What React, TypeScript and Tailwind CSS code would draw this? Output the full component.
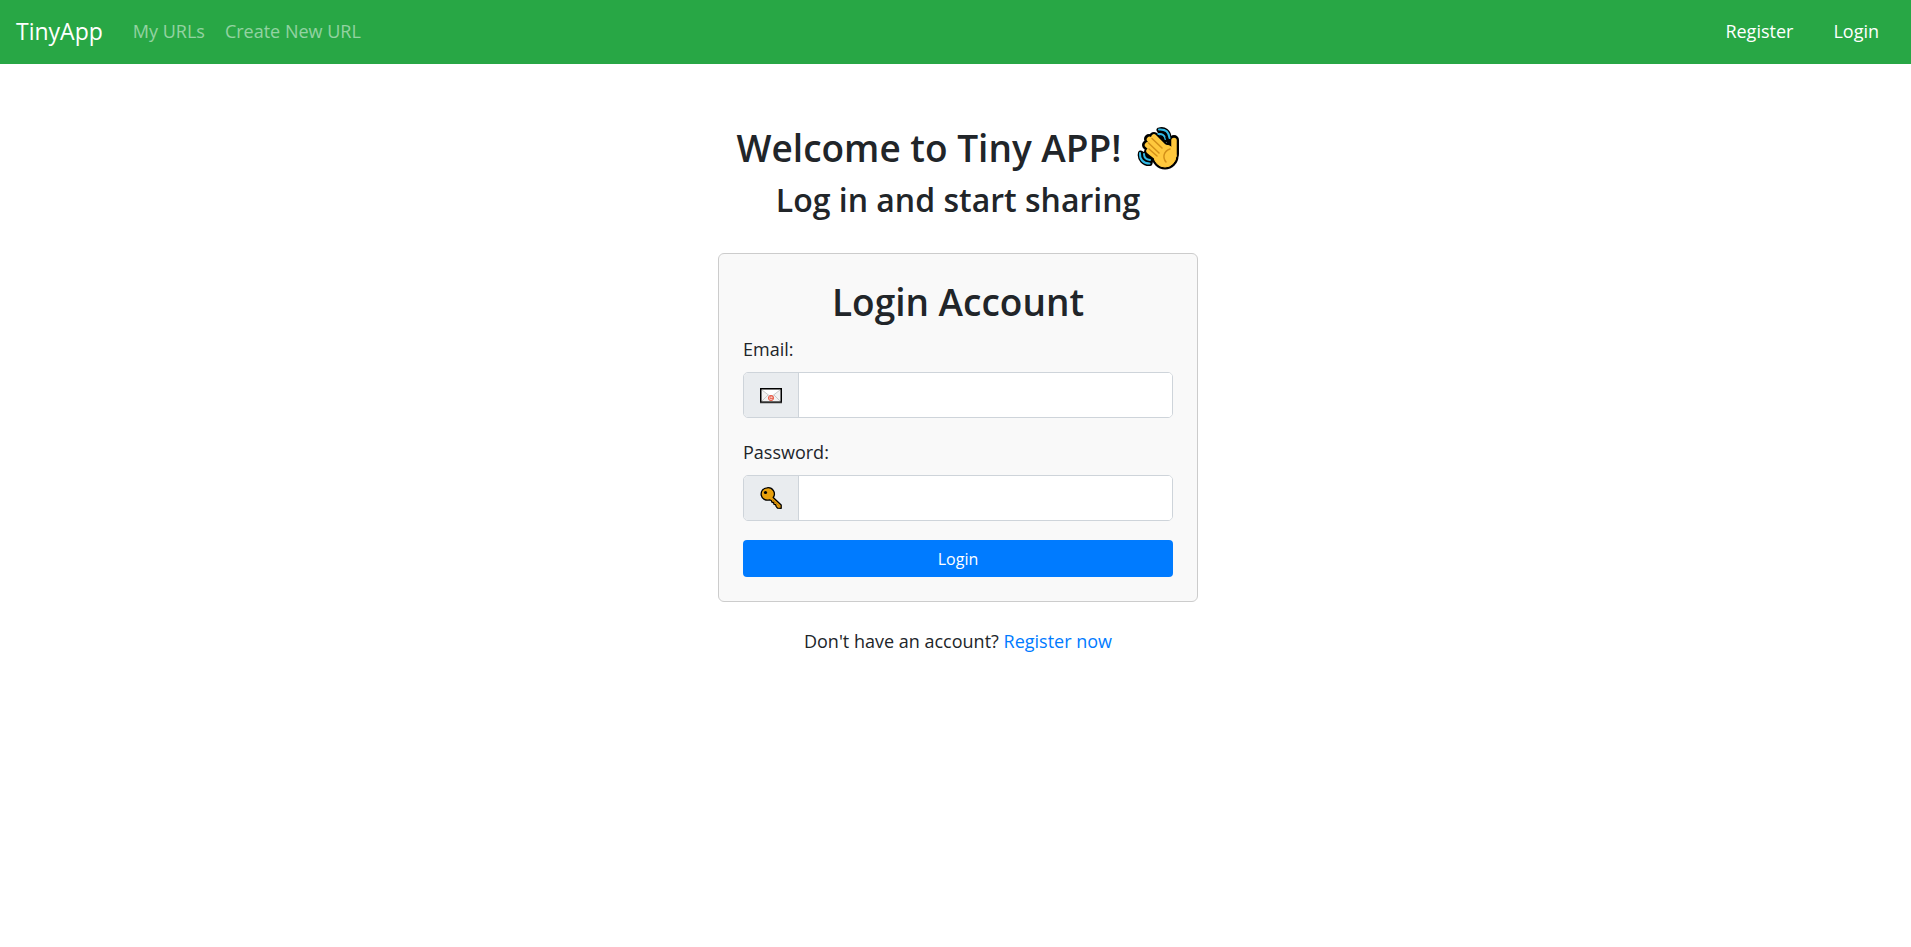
import React from "react";

function WavingHand() {
  return (
    <svg viewBox="0 0 42 44" className="h-11 w-[42px] shrink-0" role="img" aria-label="Waving hand">
      <g fill="#000" stroke="#000" strokeLinecap="round" strokeLinejoin="round">
        <path d="M22 4C27 2 32 6 32 12L28 14zM3.500 27C2 33 7 38 13 37.500L14 33z" strokeWidth="5" />
        <path d="M17 11L30 25M12 13L28 29M10 19L26 33M12 26L26 37M37 14V28" strokeWidth="10" />
        <circle cx="28" cy="30" r="12" strokeWidth="3" />
      </g>
      <path
        d="M22 3.500C28 3 32 6 32.500 12M21.500 8C25 7.500 28 9.500 28.500 13M3 27C2.500 33 6 37.500 12.500 37.500M7 28C7 31.500 9 33.500 13 34"
        fill="none"
        stroke="#32b9e6"
        strokeWidth="2"
        strokeLinecap="round"
      />
      <path d="M28 10L34 16V20L30 18z" fill="#000" />
      <g fill="#ffc83d" stroke="#ffc83d" strokeLinecap="round">
        <path d="M17 11L30 24M12.500 13.500L28 29M10.500 19L26 33M12 25L26 36" strokeWidth="5.500" />
        <path d="M37 14.500V29" strokeWidth="5.500" />
        <circle cx="28" cy="30" r="11" strokeWidth="1" />
      </g>
      <path
        d="M15 12.500L25 22M11.500 17L22 27M12 23L20 30M29 36C25 31 27 25 33 23"
        fill="none"
        stroke="#d39019"
        strokeWidth="1.500"
        strokeLinecap="round"
      />
    </svg>
  );
}

function EnvelopeIcon() {
  return (
    <svg viewBox="0 0 22 22" className="size-[22px]" aria-hidden="true">
      <rect x="0.75" y="4.75" width="20.5" height="13.5" fill="#f2f2f2" stroke="#000" strokeWidth="1.500" />
      <path d="M2 6h18l-9 7z" fill="#fff" />
      <path d="M2 6l9 7 9-7M2 17l6-6M20 17l-6-6" fill="none" stroke="#c8c8c8" />
      <path d="M0 18.500h22" stroke="#303030" strokeWidth="1.500" />
      <circle cx="11" cy="14" r="2.600" fill="#f8c5bd" stroke="#e8604c" />
      <path d="M10 14.500h3v-1a1.500 1.500 0 0 0-3 0v1" fill="none" stroke="#e8604c" strokeWidth=".8" />
    </svg>
  );
}

function KeyIcon() {
  return (
    <svg viewBox="0 0 22 22" className="size-[22px]" aria-hidden="true">
      <path
        d="M7 .8a6.200 6.200 0 1 0 2.500 12l1.800.7.7 1.800 1.600.2.400 1.800 1.600.3.500 1.700 1.400 1.900 3.700.1v-3.300l-8-7.500A6.200 6.200 0 0 0 7 .8z"
        fill="#e8a00c"
        stroke="#000"
        strokeWidth="1.300"
        strokeLinejoin="round"
      />
      <path d="M12.500 12.500l7.200 7" stroke="#c27a08" strokeWidth="1" />
      <circle cx="5.500" cy="5.500" r="1.600" fill="#000" />
    </svg>
  );
}

type FieldProps = { id: string; label: string; type: string; icon: React.ReactNode };

function Field({ id, label, type, icon }: FieldProps) {
  return (
    <div className="mb-[19px]">
      <label htmlFor={id} className="mb-2 block text-[18px] leading-[30px]">
        {label}
      </label>
      <div className="flex h-[46px] overflow-hidden rounded-[5px] border border-[#ced4da] bg-white">
        <span className="flex w-[55px] shrink-0 items-center justify-center border-r border-[#ced4da] bg-[#e9ecef]">
          {icon}
        </span>
        <input id={id} name={id} type={type} className="min-w-0 flex-1 bg-white px-3 text-[18px] outline-none" />
      </div>
    </div>
  );
}

export default function App() {
  return (
    <div className="font-['Open_Sans','Noto_Sans',sans-serif] text-[#212529]">
      <nav className="flex h-16 items-center bg-[#28a745] px-4 pb-px text-[18px] text-white">
        <a href="#" className="mr-[30px] text-[23px]">
          TinyApp
        </a>
        <div className="flex gap-5 text-white/50">
          <a href="#urls">My URLs</a>
          <a href="#new">Create New URL</a>
        </div>
        <div className="mr-4 ml-auto flex gap-10">
          <a href="#register">Register</a>
          <a href="#login">Login</a>
        </div>
      </nav>
      <main className="mx-auto flex w-full max-w-[485px] flex-col pt-[60px] pl-[5px]">
        <h1 className="flex items-center justify-center gap-4 text-[37px] leading-[48px] font-semibold whitespace-nowrap">
          Welcome to Tiny APP!
          <WavingHand />
        </h1>
        <h2 className="mt-2 text-center text-[32px] leading-[40px] font-semibold">Log in and start sharing</h2>
        <form
          className="mt-[33px] rounded-md border border-[#ccc] bg-[#f9f9f9] p-6"
          onSubmit={(e) => e.preventDefault()}
        >
          <h1 className="mb-2 text-center text-[37px] leading-[48px] font-semibold">Login Account</h1>
          <Field id="email" label="Email:" type="email" icon={<EnvelopeIcon />} />
          <Field id="password" label="Password:" type="password" icon={<KeyIcon />} />
          <button type="submit" className="block h-[37px] w-full rounded bg-[#007bff] text-[16px] text-white">
            Login
          </button>
        </form>
        <p className="mt-6 text-center text-[18px] leading-[30px]">
          Don't have an account?{" "}
          <a href="#register" className="text-[#007bff]">
            Register now
          </a>
        </p>
      </main>
    </div>
  );
}
